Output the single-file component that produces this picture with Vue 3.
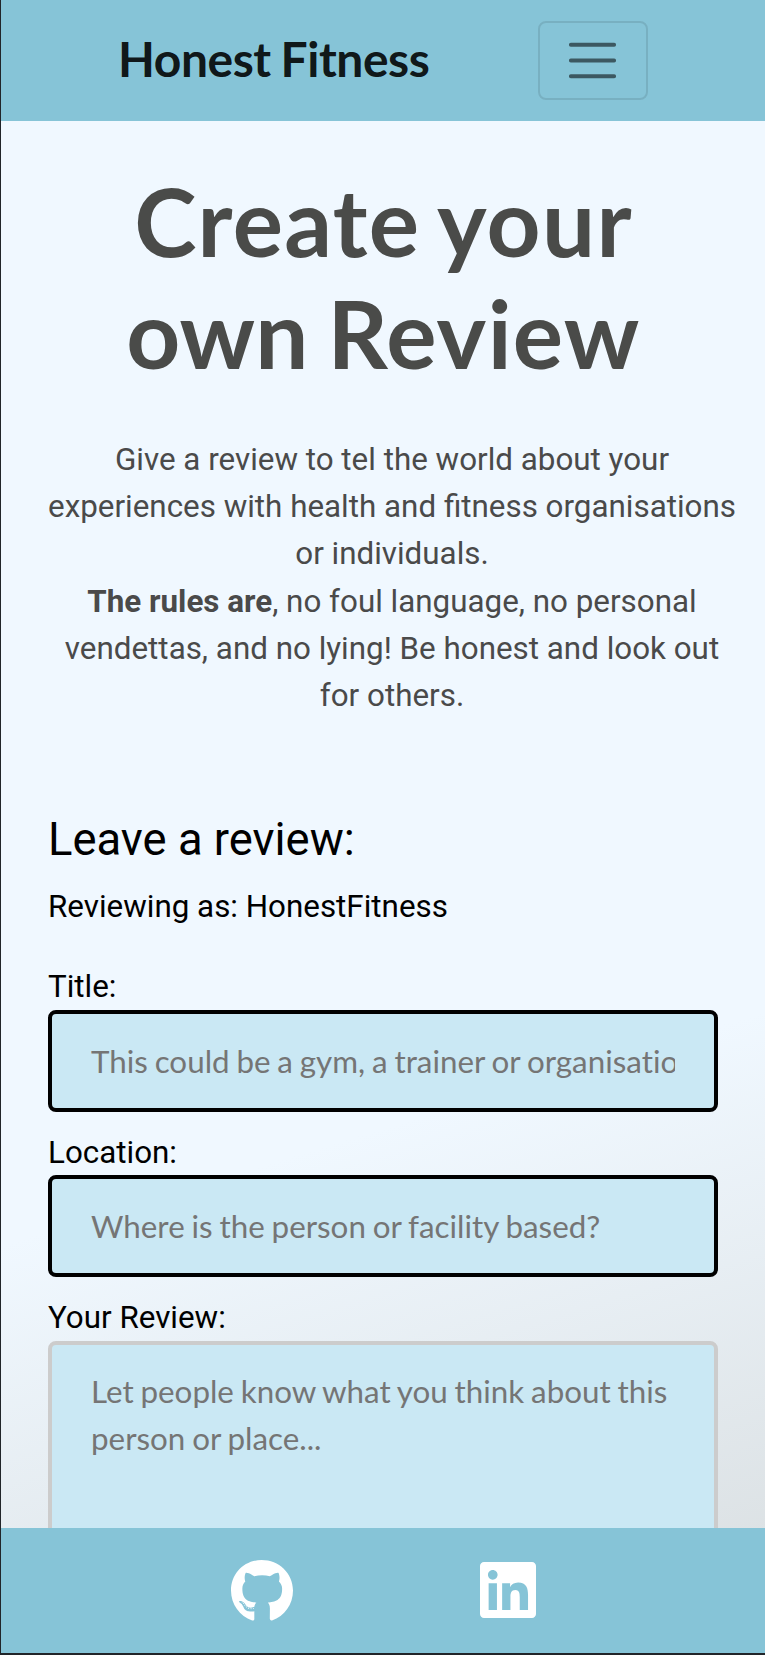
<script setup>
const fields = [
  { id: 'title', label: 'Title:', hint: 'This could be a gym, a trainer or organisation' },
  { id: 'location', label: 'Location:', hint: 'Where is the person or facility based?' },
]
</script>

<template>
  <div class="page">
    <header class="navbar">
      <a class="brand">Honest Fitness</a>
      <button class="toggler" type="button" aria-label="Menu">
        <svg viewBox="0 0 30 30" width="59" height="59">
          <path stroke="rgba(0,0,0,0.55)" stroke-linecap="round" stroke-width="2" d="M4 7h22M4 15h22M4 23h22" />
        </svg>
      </button>
    </header>

    <main class="content">
      <h1>Create your<br /><span class="tight">own</span> Review</h1>
      <p class="intro">
        Give a review to tel the world about your<br />
        experiences with health and fitness organisations<br />
        or individuals.<br />
        <strong>The rules are</strong>, no foul language, no personal<br />
        vendettas, and no lying! Be honest and look out<br />
        for others.
      </p>

      <form class="form">
        <h2>Leave a review:</h2>
        <p class="author">Reviewing as: HonestFitness</p>
        <div v-for="f in fields" :key="f.id" class="field">
          <label :for="f.id">{{ f.label }}</label>
          <input :id="f.id" type="text" :placeholder="f.hint" />
        </div>
        <div class="field">
          <label for="review">Your Review:</label>
          <textarea id="review" placeholder="Let people know what you think about this person or place..."></textarea>
        </div>
      </form>
    </main>

    <footer class="footer">
      <a class="github" aria-label="GitHub">
        <svg viewBox="0 0 496 512" width="62" height="64" fill="#fff">
          <path d="M165.9 397.4c0 2-2.3 3.6-5.2 3.6-3.3.3-5.6-1.3-5.6-3.6 0-2 2.3-3.6 5.2-3.6 3-.3 5.6 1.3 5.6 3.6zm-31.1-4.5c-.7 2 1.3 4.3 4.3 4.9 2.6 1 5.6 0 6.2-2s-1.3-4.3-4.3-5.2c-2.6-.7-5.5.3-6.2 2.3zm44.2-1.7c-2.9.7-4.9 2.6-4.6 4.9.3 2 2.9 3.3 5.9 2.6 2.9-.7 4.9-2.6 4.6-4.6-.3-1.9-3-3.2-5.9-2.9zM244.8 8C106.1 8 0 113.3 0 252c0 110.9 69.8 205.8 169.5 239.2 12.8 2.3 17.3-5.6 17.3-12.1 0-6.2-.3-40.4-.3-61.4 0 0-70 15-84.7-29.8 0 0-11.4-29.1-27.8-36.6 0 0-22.9-15.7 1.6-15.4 0 0 24.9 2 38.6 25.8 21.9 38.6 58.6 27.5 72.9 20.9 2.3-16 8.8-27.1 16-33.7-55.9-6.2-112.3-14.3-112.3-110.5 0-27.5 7.6-41.3 23.6-58.9-2.6-6.5-11.1-33.3 2.6-67.9 20.9-6.5 69 27 69 27 20-5.6 41.5-8.5 62.8-8.5s42.8 2.9 62.8 8.5c0 0 48.1-33.6 69-27 13.7 34.7 5.2 61.4 2.6 67.9 16 17.7 25.8 31.5 25.8 58.9 0 96.5-58.9 104.2-114.8 110.5 9.2 7.9 17 22.9 17 46.4 0 33.7-.3 75.4-.3 83.6 0 6.5 4.6 14.4 17.3 12.1C428.2 457.8 496 362.9 496 252 496 113.3 383.5 8 244.8 8zM97.2 352.9c-1.3 1-1 3.3.7 5.2 1.6 1.6 3.9 2.3 5.2 1 1.3-1 1-3.3-.7-5.2-1.6-1.6-3.9-2.3-5.2-1zm-10.8-8.1c-.7 1.3.3 2.9 2.3 3.9 1.6 1 3.6.7 4.3-.7.7-1.3-.3-2.9-2.3-3.9-2-.6-3.6-.3-4.3.7zm32.4 35.6c-1.6 1.3-1 4.3 1.3 6.2 2.3 2.3 5.2 2.6 6.5 1 1.3-1.3.7-4.3-1.3-6.2-2.2-2.3-5.2-2.6-6.5-1zm-11.4-14.7c-1.6 1-1.6 3.6 0 5.9 1.6 2.3 4.3 3.3 5.6 2.3 1.6-1.3 1.6-3.9 0-6.2-1.4-2.3-4-3.3-5.6-2z" />
        </svg>
      </a>
      <a aria-label="LinkedIn">
        <svg viewBox="0 0 448 512" width="56" height="64" fill="#fff">
          <path d="M416 32H31.9C14.3 32 0 46.5 0 64.3v383.4C0 465.5 14.3 480 31.9 480H416c17.6 0 32-14.5 32-32.3V64.3c0-17.8-14.4-32.3-32-32.3zM135.4 416H69V202.2h66.5V416zm-33.2-243c-21.3 0-38.5-17.3-38.5-38.5S80.9 96 102.2 96c21.2 0 38.5 17.3 38.5 38.5 0 21.3-17.2 38.5-38.5 38.5zm282.1 243h-66.4V312c0-24.8-.5-56.7-34.5-56.7-34.6 0-39.9 27-39.9 54.9V416h-66.4V202.2h63.7v29.2h.9c8.9-16.8 30.6-34.5 62.9-34.5 67.2 0 79.7 44.3 79.7 101.9V416z" />
        </svg>
      </a>
    </footer>
  </div>
</template>

<style>
body {
  margin: 0;
  background: #212529;
}
</style>

<style scoped>
.page {
  box-sizing: border-box;
  display: flex;
  flex-direction: column;
  width: 765px;
  height: 1655px;
  overflow: hidden;
  border-left: 1px solid #212529;
  border-bottom: 2px solid #212529;
  background: linear-gradient(163deg, #f0f8ff 66%, #d8dddf 100%);
  font-family: Roboto, sans-serif;
  font-size: 31.36px;
  line-height: 47.2px;
  color: #000;
}
.navbar {
  flex: none;
  box-sizing: border-box;
  display: flex;
  align-items: center;
  justify-content: space-between;
  height: 121px;
  padding: 0 117px 1px 117px;
  background: #86c4d7;
}
.brand {
  padding-bottom: 2px;
  font-family: Lato, sans-serif;
  font-weight: 700;
  font-size: 48px;
  line-height: 70px;
  letter-spacing: -0.45px;
  word-spacing: -1.5px;
  color: rgba(0, 0, 0, 0.9);
}
.toggler {
  box-sizing: border-box;
  display: flex;
  align-items: center;
  justify-content: center;
  width: 110px;
  height: 79px;
  padding: 0 1px 0 0;
  border: 2px solid rgba(0, 0, 0, 0.1);
  border-radius: 8px;
  background: transparent;
}
.content {
  flex: 1;
  min-height: 0;
  overflow: hidden;
  padding: 44px 46px 0 47px;
}
h1 {
  margin: 0;
  font-family: Lato, sans-serif;
  font-weight: 700;
  font-size: 94.2px;
  line-height: 112px;
  letter-spacing: 1.3px;
  word-spacing: -5px;
  text-align: center;
  color: #4a4b49;
}
.tight {
  letter-spacing: 0;
}
.intro {
  margin: 47px -17px 0 0;
  text-align: center;
  white-space: nowrap;
  color: #4a4a4a;
}
.intro strong {
  font-weight: 700;
}
.form {
  margin-top: 94px;
}
h2 {
  margin: 0;
  font-weight: 400;
  font-size: 45.4px;
  line-height: 53px;
}
.author {
  margin: 17px 0 33px;
}
.field {
  height: 165.5px;
}
label {
  display: block;
}
input,
textarea {
  box-sizing: border-box;
  display: block;
  width: 670px;
  margin: -1px 0 0;
  padding: 23px 39px;
  border: 4px solid #000;
  border-radius: 8px;
  background: #cae8f4;
  font-family: Lato, sans-serif;
  font-size: 31.36px;
  line-height: 47.2px;
  word-spacing: -1.2px;
  font-variant-ligatures: none;
  outline: none;
}
input {
  height: 102px;
}
textarea {
  height: 300px;
  border-color: #ccc;
  resize: none;
}
::placeholder {
  color: #757575;
  opacity: 1;
}
.footer {
  flex: none;
  box-sizing: border-box;
  display: flex;
  align-items: center;
  gap: 187px;
  height: 125px;
  padding: 0 0 1px 230px;
  background: #86c4d7;
}
.footer svg {
  display: block;
}
.github {
  margin-top: 1px;
}
</style>
